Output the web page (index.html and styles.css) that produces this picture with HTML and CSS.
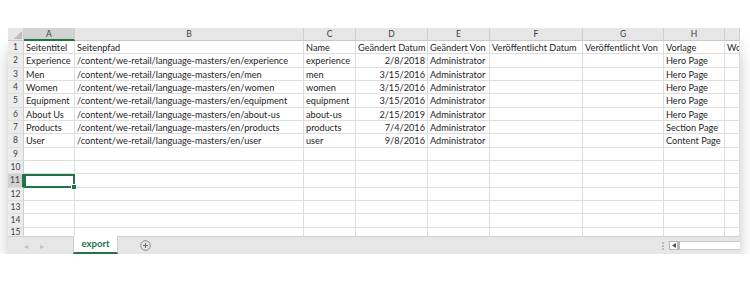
FILE: index.html
```html
<!DOCTYPE html>
<html>
<head>
<meta charset="utf-8">
<link rel="stylesheet" href="styles.css">
</head>
<body>
<div class="sheet">
  <div class="grid">
    <div class="row head">
      <div class="c corner"><svg width="8" height="8" viewBox="0 0 8 8"><polygon points="8,0 8,8 0,8" fill="#bdbdbd"/></svg></div>
      <div class="c sel">A</div><div class="c">B</div><div class="c">C</div><div class="c">D</div><div class="c">E</div><div class="c">F</div><div class="c">G</div><div class="c">H</div><div class="c"></div>
    </div>
    <div class="row"><div class="c n">1</div><div class="c">Seitentitel</div><div class="c">Seitenpfad</div><div class="c">Name</div><div class="c">Geändert Datum</div><div class="c">Geändert Von</div><div class="c">Veröffentlicht Datum</div><div class="c">Veröffentlicht Von</div><div class="c">Vorlage</div><div class="c last">Wo</div></div>
    <div class="row"><div class="c n">2</div><div class="c">Experience</div><div class="c">/content/we-retail/language-masters/en/experience</div><div class="c">experience</div><div class="c r">2/8/2018</div><div class="c">Administrator</div><div class="c"></div><div class="c"></div><div class="c">Hero Page</div><div class="c"></div></div>
    <div class="row"><div class="c n">3</div><div class="c">Men</div><div class="c">/content/we-retail/language-masters/en/men</div><div class="c">men</div><div class="c r">3/15/2016</div><div class="c">Administrator</div><div class="c"></div><div class="c"></div><div class="c">Hero Page</div><div class="c"></div></div>
    <div class="row"><div class="c n">4</div><div class="c">Women</div><div class="c">/content/we-retail/language-masters/en/women</div><div class="c">women</div><div class="c r">3/15/2016</div><div class="c">Administrator</div><div class="c"></div><div class="c"></div><div class="c">Hero Page</div><div class="c"></div></div>
    <div class="row"><div class="c n">5</div><div class="c">Equipment</div><div class="c">/content/we-retail/language-masters/en/equipment</div><div class="c">equipment</div><div class="c r">3/15/2016</div><div class="c">Administrator</div><div class="c"></div><div class="c"></div><div class="c">Hero Page</div><div class="c"></div></div>
    <div class="row"><div class="c n">6</div><div class="c">About Us</div><div class="c">/content/we-retail/language-masters/en/about-us</div><div class="c">about-us</div><div class="c r">2/15/2019</div><div class="c">Administrator</div><div class="c"></div><div class="c"></div><div class="c">Hero Page</div><div class="c"></div></div>
    <div class="row"><div class="c n">7</div><div class="c">Products</div><div class="c">/content/we-retail/language-masters/en/products</div><div class="c">products</div><div class="c r">7/4/2016</div><div class="c">Administrator</div><div class="c"></div><div class="c"></div><div class="c">Section Page</div><div class="c"></div></div>
    <div class="row"><div class="c n">8</div><div class="c">User</div><div class="c">/content/we-retail/language-masters/en/user</div><div class="c">user</div><div class="c r">9/8/2016</div><div class="c">Administrator</div><div class="c"></div><div class="c"></div><div class="c">Content Page</div><div class="c"></div></div>
    <div class="row"><div class="c n">9</div><div class="c"></div><div class="c"></div><div class="c"></div><div class="c"></div><div class="c"></div><div class="c"></div><div class="c"></div><div class="c"></div><div class="c"></div></div>
    <div class="row"><div class="c n">10</div><div class="c"></div><div class="c"></div><div class="c"></div><div class="c"></div><div class="c"></div><div class="c"></div><div class="c"></div><div class="c"></div><div class="c"></div></div>
    <div class="row"><div class="c n nsel">11</div><div class="c active"><span class="handle"></span></div><div class="c"></div><div class="c"></div><div class="c"></div><div class="c"></div><div class="c"></div><div class="c"></div><div class="c"></div><div class="c"></div></div>
    <div class="row"><div class="c n">12</div><div class="c"></div><div class="c"></div><div class="c"></div><div class="c"></div><div class="c"></div><div class="c"></div><div class="c"></div><div class="c"></div><div class="c"></div></div>
    <div class="row"><div class="c n">13</div><div class="c"></div><div class="c"></div><div class="c"></div><div class="c"></div><div class="c"></div><div class="c"></div><div class="c"></div><div class="c"></div><div class="c"></div></div>
    <div class="row"><div class="c n">14</div><div class="c"></div><div class="c"></div><div class="c"></div><div class="c"></div><div class="c"></div><div class="c"></div><div class="c"></div><div class="c"></div><div class="c"></div></div>
    <div class="row short"><div class="c n">15</div><div class="c"></div><div class="c"></div><div class="c"></div><div class="c"></div><div class="c"></div><div class="c"></div><div class="c"></div><div class="c"></div><div class="c"></div></div>
  </div>
  <div class="tabbar">
    <div class="nav"><span>&#x25C2;</span><span>&#x25B8;</span></div>
    <div class="tab">export</div>
    <div class="add"><svg width="11" height="11" viewBox="0 0 11 11"><circle cx="5.5" cy="5.5" r="4.8" fill="none" stroke="#8a8a8a" stroke-width="1"/><path d="M5.5 3v5M3 5.5h5" stroke="#6a6a6a" stroke-width="1.1"/></svg></div>
    <div class="spacer"></div>
    <div class="dots"><i></i><i></i><i></i></div>
    <div class="scroll"><div class="sbtn"><svg width="4" height="5" viewBox="0 0 4 5"><polygon points="4,0 4,5 0,2.5" fill="#555"/></svg></div><div class="track"></div></div>
  </div>
</div>
</body>
</html>
```

FILE: styles.css
```css
html, body { margin: 0; padding: 0; background: #fff; }
body { padding: 28px 10px 0 8px; }
.sheet {
  width: 732px;
  height: 226px;
  display: flex;
  flex-direction: column;
  background: #fff;
  box-shadow: 0 16px 18px -6px rgba(0,0,0,0.45);
  overflow: hidden;
  font-family: "Lato", "Open Sans", sans-serif;
  font-size: 9.2px;
  color: #1e1e1e;
}
.grid { height: 208px; overflow: hidden; }
.row {
  display: grid;
  grid-template-columns: 16px 51px 229px 52px 72px 62px 93px 81px 61px 15px;
  height: 13.33px;
}
.row.head { height: 13px; background: #e6e6e6; }
.row.short { height: 9px; }
.c {
  border-right: 1px solid #dedede;
  border-bottom: 1px solid #dedede;
  padding: 0 2px;
  line-height: 13px;
  white-space: nowrap;
  overflow: hidden;
  box-sizing: border-box;
}
.c.last { padding: 0 0 0 2px; }
.head .c {
  text-align: center;
  color: #3d3d3d;
  font-size: 8.5px;
  border-right: 1px solid #cfcfcf;
  border-bottom: 1px solid #c9c9c9;
  line-height: 12px;
}
.head .corner { display: flex; align-items: flex-end; justify-content: flex-end; padding: 0 1px 1px 0; }
.head .sel { background: #d2d2d2; border-bottom: 2px solid #217346; }
.c.n {
  background: #ececec;
  text-align: center;
  padding: 0;
  color: #3d3d3d;
  font-size: 8.5px;
  border-right: 1px solid #cfcfcf;
}
.short .c { line-height: 9px; border-bottom: none; }
.c.n.nsel { background: #d2d2d2; border-right: 2px solid #217346; }
.c.r { text-align: right; }
.c.active {
  position: relative;
  border: 2px solid #217346;
  overflow: visible;
}
.handle {
  position: absolute;
  right: -4px;
  bottom: -4px;
  width: 4px;
  height: 4px;
  background: #217346;
  border: 1px solid #fff;
}
.tabbar {
  height: 18px;
  display: flex;
  align-items: stretch;
  background: #e6e6e6;
  border-top: 1px solid #d0d0d0;
  box-sizing: border-box;
}
.nav {
  width: 65px;
  display: flex;
  gap: 12px;
  padding-left: 16px;
  align-items: center;
  color: #c2c2c2;
  font-size: 8px;
  box-sizing: border-box;
}
.tab {
  width: 43px;
  background: #fff;
  color: #217346;
  font-weight: bold;
  text-align: center;
  line-height: 15px;
  border-left: 1px solid #cfcfcf;
  border-right: 1px solid #cfcfcf;
  border-bottom: 2px solid #217346;
  margin-top: -1px;
  font-size: 9.6px;
}
.add { width: 54px; display: flex; align-items: center; justify-content: center; }
.spacer { flex: 1; }
.dots { width: 12px; display: flex; flex-direction: column; align-items: center; justify-content: center; gap: 1px; }
.dots i { display: block; width: 2px; height: 2px; background: #bdbdbd; }
.scroll { width: 71px; display: flex; align-items: center; padding-right: 0; }
.sbtn { width: 9px; height: 9px; background: #fff; border: 1px solid #b8b8b8; display: flex; align-items: center; justify-content: center; box-sizing: border-box; }
.track { flex: 1; height: 9px; background: #fff; border: 1px solid #c8c8c8; border-left: 2px solid #b8b8b8; border-right: none; box-sizing: border-box; }
```
